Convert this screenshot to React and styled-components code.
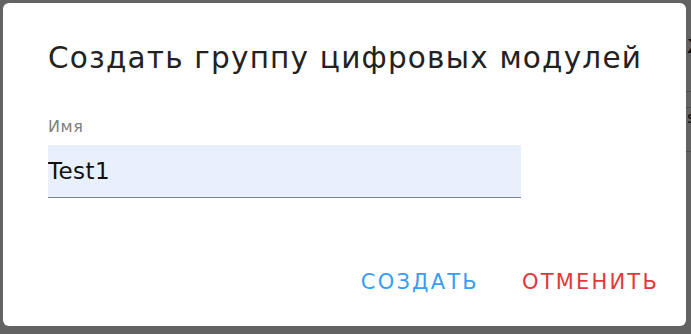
import React from 'react';
import styled, { createGlobalStyle } from 'styled-components';

const Global = createGlobalStyle`
  html, body {
    margin: 0;
    padding: 0;
    height: 100%;
  }
  body {
    font-family: 'DejaVu Sans', 'Noto Sans', sans-serif;
    background: #ffffff;
    overflow: hidden;
  }
`;

const Page = styled.div`
  height: 334px;
  display: flex;
  flex-direction: column;
  align-items: flex-end;
  padding-top: 34px;
  box-sizing: border-box;
`;

const PageRow = styled.div`
  width: 120px;
  height: ${p => p.h}px;
  border-bottom: 1px solid #c8c8c8;
  font: ${p => (p.bold ? '700 20px' : '400 16px')} 'DejaVu Sans', sans-serif;
  color: #222;
  white-space: nowrap;
  padding-left: 116px;
  box-sizing: border-box;
  overflow: hidden;
`;

const Overlay = styled.div`
  position: fixed;
  inset: 0;
  background: rgba(0, 0, 0, 0.61);
  padding: 3px 5px 8px 3px;
  box-sizing: border-box;
  display: flex;
`;

const Dialog = styled.div`
  flex: 1;
  background: #ffffff;
  border-radius: 6px;
  padding: 0 27px 0 45px;
  display: flex;
  flex-direction: column;
`;

const Title = styled.h2`
  margin: 35px 0 0 0;
  font-family: 'DejaVu Sans', sans-serif;
  font-weight: 400;
  font-size: 29.5px;
  line-height: 40px;
  color: #222222;
  letter-spacing: 1.2px;
  white-space: nowrap;
`;

const Field = styled.div`
  margin-top: 39px;
  width: 473px;
  display: flex;
  flex-direction: column;
`;

const Label = styled.label`
  font-size: 16px;
  line-height: 20px;
  color: #808080;
  letter-spacing: 0.6px;
  margin-bottom: 8px;
`;

const Input = styled.input`
  height: 53px;
  box-sizing: border-box;
  border: none;
  border-bottom: 1px solid #7d8390;
  background: #e8f0fe;
  padding: 0;
  font-family: 'DejaVu Sans', sans-serif;
  font-weight: 400;
  font-size: 23px;
  letter-spacing: 0.4px;
  color: #111111;
  outline: none;
`;

const Actions = styled.div`
  margin-top: auto;
  margin-bottom: 30px;
  display: flex;
  justify-content: flex-end;
  gap: 43px;
`;

const ActionButton = styled.button`
  border: none;
  background: none;
  padding: 0;
  font-family: 'DejaVu Sans', sans-serif;
  font-weight: 400;
  font-size: 21px;
  line-height: 28px;
  letter-spacing: 2.2px;
  text-transform: uppercase;
  color: ${p => p.color};
  cursor: pointer;
`;

export default function App() {
  return (
    <>
      <Global />
      <Page>
        <PageRow h={58} bold>Ж</PageRow>
        <PageRow h={16} />
        <PageRow h={44}>s</PageRow>
      </Page>
      <Overlay>
        <Dialog>
          <Title>Создать группу цифровых модулей</Title>
          <Field>
            <Label>Имя</Label>
            <Input defaultValue="Test1" />
          </Field>
          <Actions>
            <ActionButton color="#3a9df5">Создать</ActionButton>
            <ActionButton color="#e2383b">Отменить</ActionButton>
          </Actions>
        </Dialog>
      </Overlay>
    </>
  );
}
